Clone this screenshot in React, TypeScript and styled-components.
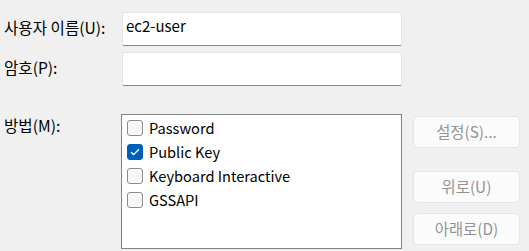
import React from 'react';
import styled, { createGlobalStyle } from 'styled-components';

const GlobalStyle = createGlobalStyle`
  body {
    margin: 0;
    background: #f0f0f0;
    font-family: "Noto Sans CJK KR", "Noto Sans", sans-serif;
    font-size: 15px;
    color: #000;
  }
`;

const Dialog_ = styled.div`
  width: 529px;
  height: 251px;
  box-sizing: border-box;
  padding: 12px 0 0 4px;
  display: flex;
  flex-direction: column;
`;

const Row_ = styled.div<{ $gap?: number }>`
  display: flex;
  align-items: flex-start;
  margin-top: ${(p) => p.$gap ?? 0}px;
`;

const Label_ = styled.label<{ $top?: number }>`
  width: 118px;
  flex: none;
  font-size: 15.6px;
  line-height: 20px;
  padding-top: ${(p) => p.$top ?? 0}px;
  white-space: nowrap;
`;

const Input_ = styled.div`
  width: 280px;
  height: 34px;
  box-sizing: border-box;
  background: #fff;
  border: 1px solid #e5e5e5;
  border-bottom-color: #868686;
  border-radius: 2px;
  padding: 3px 0 0 3px;
  line-height: 20px;
`;

const ListBox_ = styled.div`
  width: 281px;
  height: 135px;
  box-sizing: border-box;
  margin-left: -1px;
  background: #fff;
  border: 1px solid #828282;
  padding: 1px 0 0 5px;
`;

const Item_ = styled.div`
  height: 24px;
  display: flex;
  align-items: center;
  gap: 6px;
  font-size: 14.6px;
  white-space: nowrap;
`;

const ItemText_ = styled.span`
  margin-top: -2px;
`;

const Check_ = styled.span<{ $on?: boolean }>`
  width: 16px;
  height: 16px;
  box-sizing: border-box;
  border-radius: 3px;
  border: 1px solid ${(p) => (p.$on ? '#005fb8' : '#8a8a8a')};
  background: ${(p) => (p.$on ? '#005fb8' : '#f7f7f7')};
  display: flex;
  align-items: center;
  justify-content: center;
`;

const Buttons_ = styled.div`
  margin-left: 11px;
  padding-top: 2px;
  display: flex;
  flex-direction: column;
`;

const Button_ = styled.button<{ $gap?: number }>`
  width: 107px;
  height: 32px;
  margin-top: ${(p) => p.$gap ?? 0}px;
  background: #fbfbfb;
  border: 1px solid #e6e6e6;
  border-radius: 4px;
  color: #939393;
  font: inherit;
  font-size: 15.4px;
  padding: 0 0 2px;
`;

const methods = [
  { name: 'Password', on: false },
  { name: 'Public Key', on: true },
  { name: 'Keyboard Interactive', on: false },
  { name: 'GSSAPI', on: false },
];

function App() {
  return (
    <Dialog_>
      <GlobalStyle />
      <Row_>
        <Label_ $top={5}>사용자 이름(U):</Label_>
        <Input_>ec2-user</Input_>
      </Row_>
      <Row_ $gap={6}>
        <Label_ $top={5}>암호(P):</Label_>
        <Input_ />
      </Row_>
      <Row_ $gap={28}>
        <Label_ $top={1}>방법(M):</Label_>
        <ListBox_>
          {methods.map((m) => (
            <Item_ key={m.name}>
              <Check_ $on={m.on}>
                {m.on && (
                  <svg width="10" height="8" viewBox="0 0 10 8">
                    <path d="M1 4.2 L3.6 6.6 L9 1.2" fill="none" stroke="#fff" strokeWidth="1.3" />
                  </svg>
                )}
              </Check_>
              <ItemText_>{m.name}</ItemText_>
            </Item_>
          ))}
        </ListBox_>
        <Buttons_>
          <Button_ disabled>설정(S)...</Button_>
          <Button_ disabled $gap={23}>위로(U)</Button_>
          <Button_ disabled $gap={10}>아래로(D)</Button_>
        </Buttons_>
      </Row_>
    </Dialog_>
  );
}

export default App;
